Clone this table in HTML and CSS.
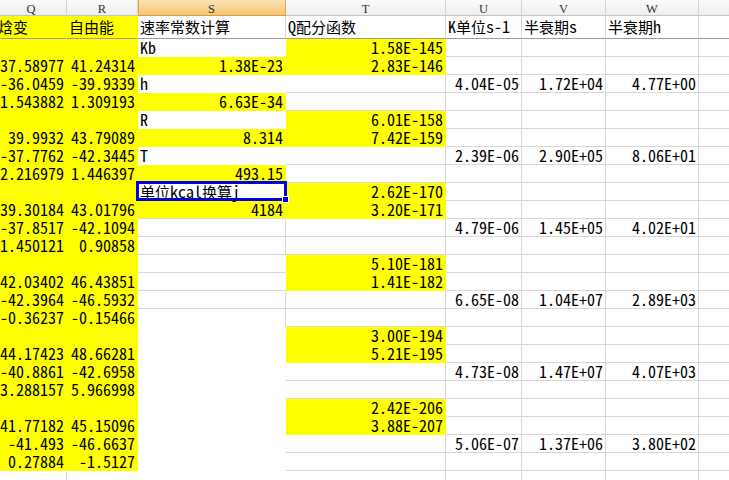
FILE: index.html
```html
<!DOCTYPE html>
<html lang="zh">
<head>
<meta charset="utf-8">
<title>Sheet</title>
<link rel="stylesheet" href="styles.css">
</head>
<body>
<div class="viewport">
<div class="sheet">
<div class="h">Q</div><div class="h">R</div><div class="h hs">S</div><div class="h">T</div><div class="h">U</div><div class="h">V</div><div class="h">W</div><div class="h"></div>

<div class="c y lab"><span class="zh">焓变</span></div><div class="c y lab"><span class="zh">自由能</span></div><div class="c lab"><span class="zh">速率常数计算</span></div><div class="c lab">Q<span class="zh">配分函数</span></div><div class="c lab">K<span class="zh">单位</span>s-1</div><div class="c lab"><span class="zh">半衰期</span>s</div><div class="c lab"><span class="zh">半衰期</span>h</div><div class="c lab"></div>

<div class="c y"></div><div class="c y"></div><div class="c w">Kb</div><div class="c y n">1.58E-145</div><div class="c"></div><div class="c"></div><div class="c"></div><div class="c"></div>
<div class="c y n">37.58977</div><div class="c y n">41.24314</div><div class="c y n">1.38E-23</div><div class="c y n">2.83E-146</div><div class="c"></div><div class="c"></div><div class="c"></div><div class="c"></div>
<div class="c y n">-36.0459</div><div class="c y n">-39.9339</div><div class="c w">h</div><div class="c"></div><div class="c n">4.04E-05</div><div class="c n">1.72E+04</div><div class="c n">4.77E+00</div><div class="c"></div>
<div class="c y n">1.543882</div><div class="c y n">1.309193</div><div class="c y n">6.63E-34</div><div class="c"></div><div class="c"></div><div class="c"></div><div class="c"></div><div class="c"></div>
<div class="c y"></div><div class="c y"></div><div class="c w">R</div><div class="c y n">6.01E-158</div><div class="c"></div><div class="c"></div><div class="c"></div><div class="c"></div>
<div class="c y n">39.9932</div><div class="c y n">43.79089</div><div class="c y n">8.314</div><div class="c y n">7.42E-159</div><div class="c"></div><div class="c"></div><div class="c"></div><div class="c"></div>
<div class="c y n">-37.7762</div><div class="c y n">-42.3445</div><div class="c w">T</div><div class="c"></div><div class="c n">2.39E-06</div><div class="c n">2.90E+05</div><div class="c n">8.06E+01</div><div class="c"></div>
<div class="c y n">2.216979</div><div class="c y n">1.446397</div><div class="c y n">493.15</div><div class="c"></div><div class="c"></div><div class="c"></div><div class="c"></div><div class="c"></div>
<div class="c y"></div><div class="c y"></div><div class="c w sel"><span class="zh">单位</span>kcal<span class="zh">换算</span>j<i class="selbox"></i><i class="handle"></i></div><div class="c y n">2.62E-170</div><div class="c"></div><div class="c"></div><div class="c"></div><div class="c"></div>
<div class="c y n">39.30184</div><div class="c y n">43.01796</div><div class="c y n bb">4184</div><div class="c y n">3.20E-171</div><div class="c"></div><div class="c"></div><div class="c"></div><div class="c"></div>
<div class="c y n">-37.8517</div><div class="c y n">-42.1094</div><div class="c"></div><div class="c"></div><div class="c n">4.79E-06</div><div class="c n">1.45E+05</div><div class="c n">4.02E+01</div><div class="c"></div>
<div class="c y n">1.450121</div><div class="c y n">0.90858</div><div class="c"></div><div class="c"></div><div class="c"></div><div class="c"></div><div class="c"></div><div class="c"></div>
<div class="c y"></div><div class="c y"></div><div class="c nr"></div><div class="c y n">5.10E-181</div><div class="c"></div><div class="c"></div><div class="c"></div><div class="c"></div>
<div class="c y n">42.03402</div><div class="c y n">46.43851</div><div class="c nr"></div><div class="c y n">1.41E-182</div><div class="c"></div><div class="c"></div><div class="c"></div><div class="c"></div>
<div class="c y n">-42.3964</div><div class="c y n">-46.5932</div><div class="c"></div><div class="c"></div><div class="c n">6.65E-08</div><div class="c n">1.04E+07</div><div class="c n">2.89E+03</div><div class="c"></div>
<div class="c y n">-0.36237</div><div class="c y n">-0.15466</div><div class="c nb"></div><div class="c"></div><div class="c"></div><div class="c"></div><div class="c"></div><div class="c"></div>
<div class="c y"></div><div class="c y"></div><div class="c w"></div><div class="c y n">3.00E-194</div><div class="c"></div><div class="c"></div><div class="c"></div><div class="c"></div>
<div class="c y n">44.17423</div><div class="c y n">48.66281</div><div class="c w"></div><div class="c y n">5.21E-195</div><div class="c"></div><div class="c"></div><div class="c"></div><div class="c"></div>
<div class="c y n">-40.8861</div><div class="c y n">-42.6958</div><div class="c w"></div><div class="c"></div><div class="c n">4.73E-08</div><div class="c n">1.47E+07</div><div class="c n">4.07E+03</div><div class="c"></div>
<div class="c y n">3.288157</div><div class="c y n">5.966998</div><div class="c w"></div><div class="c"></div><div class="c"></div><div class="c"></div><div class="c"></div><div class="c"></div>
<div class="c y"></div><div class="c y"></div><div class="c w"></div><div class="c y n">2.42E-206</div><div class="c"></div><div class="c"></div><div class="c"></div><div class="c"></div>
<div class="c y n">41.77182</div><div class="c y n">45.15096</div><div class="c w"></div><div class="c y n">3.88E-207</div><div class="c"></div><div class="c"></div><div class="c"></div><div class="c"></div>
<div class="c y n">-41.493</div><div class="c y n">-46.6637</div><div class="c w"></div><div class="c"></div><div class="c n">5.06E-07</div><div class="c n">1.37E+06</div><div class="c n">3.80E+02</div><div class="c"></div>
<div class="c y n">0.27884</div><div class="c y n">-1.5127</div><div class="c w"></div><div class="c"></div><div class="c"></div><div class="c"></div><div class="c"></div><div class="c"></div>
<div class="c"></div><div class="c nr"></div><div class="c w"></div><div class="c"></div><div class="c"></div><div class="c"></div><div class="c"></div><div class="c"></div>
</div>
</div>
</body>
</html>
```
FILE: styles.css
```css
body {
  margin: 0;
  background: #fff;
}

.viewport {
  width: 729px;
  height: 480px;
  overflow: hidden;
}

.sheet {
  display: grid;
  grid-template-columns: 71px 71px 148px 160px 76px 84px 93px 60px;
  grid-template-rows: 16px 23px;
  grid-auto-rows: 18px;
  margin-left: -4px;
  font-family: "Noto Sans CJK SC", sans-serif;
  font-size: 16px;
  font-feature-settings: "hwid" 1;
  color: #000;
}

.h {
  box-sizing: border-box;
  height: 16px;
  padding-top: 1px;
  background: linear-gradient(#fbfbfb, #eceef0);
  border-right: 1px solid #d5d5d5;
  border-bottom: 1px solid #c4c4c4;
  text-align: center;
  font-family: "Liberation Serif", serif;
  font-size: 12.5px;
  line-height: 16px;
  color: #333;
  overflow: hidden;
}

.hs {
  background: linear-gradient(#fbe2b3, #f4c676);
  border-right-color: #e6a64a;
  border-bottom-color: #e39b34;
  box-shadow: inset 1px 0 #e6a64a;
}

.c {
  box-sizing: border-box;
  padding: 0 2px;
  border-right: 1px solid #d8d8d8;
  border-bottom: 1px solid #d8d8d8;
  background: #fff;
  line-height: 16px;
  white-space: nowrap;
}

.y {
  background: #ff0;
  border-color: transparent;
}

.w {
  border-color: transparent;
}

.nr {
  border-right-color: transparent;
}

.nb {
  border-bottom-color: transparent;
}

.bb {
  border-bottom-color: #d8d8d8;
}

.n {
  text-align: right;
}

.lab {
  padding-top: 2px;
  border-bottom-color: #9c9c9c;
}

.zh {
  font-size: 15px;
  font-feature-settings: normal;
}

.sel {
  position: relative;
  z-index: 2;
}

.selbox {
  position: absolute;
  left: -2px;
  top: -2px;
  right: -2px;
  bottom: -1px;
  border: 3px solid #0000e6;
}

.handle {
  position: absolute;
  right: -4px;
  bottom: -3px;
  width: 5px;
  height: 5px;
  background: #0000e6;
  border: 1px solid #fff;
}
```
